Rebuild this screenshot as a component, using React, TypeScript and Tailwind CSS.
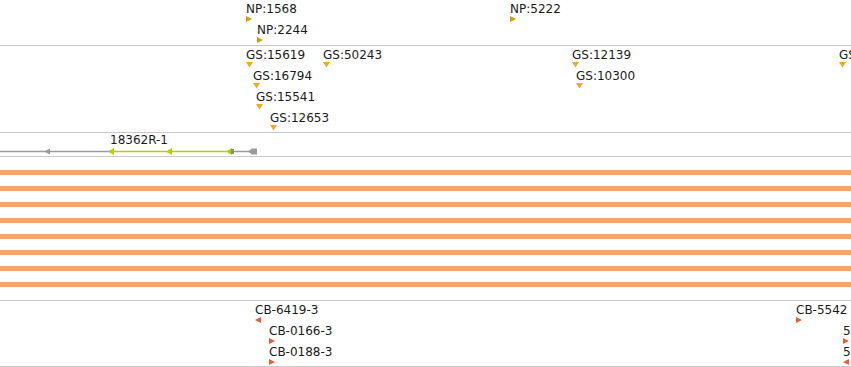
type Feat = { label: string; x: number; y: number; dir: 'right' | 'left' | 'down' };

const np: Feat[] = [
  { label: 'NP:1568', x: 246, y: 2, dir: 'right' },
  { label: 'NP:2244', x: 257, y: 23, dir: 'right' },
  { label: 'NP:5222', x: 510, y: 2, dir: 'right' },
];

const gs: Feat[] = [
  { label: 'GS:15619', x: 246, y: 2, dir: 'down' },
  { label: 'GS:50243', x: 323, y: 2, dir: 'down' },
  { label: 'GS:16794', x: 253, y: 23, dir: 'down' },
  { label: 'GS:15541', x: 256, y: 44, dir: 'down' },
  { label: 'GS:12653', x: 270, y: 65, dir: 'down' },
  { label: 'GS:12139', x: 572, y: 2, dir: 'down' },
  { label: 'GS:10300', x: 576, y: 23, dir: 'down' },
  { label: 'GS', x: 839, y: 2, dir: 'down' },
];

const cb: Feat[] = [
  { label: 'CB-6419-3', x: 255, y: 2, dir: 'left' },
  { label: 'CB-0166-3', x: 269, y: 23, dir: 'right' },
  { label: 'CB-0188-3', x: 269, y: 44, dir: 'right' },
  { label: 'CB-5542', x: 796, y: 2, dir: 'right' },
  { label: '5', x: 843, y: 23, dir: 'right' },
  { label: '5', x: 843, y: 44, dir: 'left' },
];

function Marker({ dir, color }: { dir: Feat['dir']; color: string }) {
  if (dir === 'down') {
    return (
      <svg width="7" height="6" className="block">
        <polygon points="0,0 7,0 3.5,5.5" fill={color} />
      </svg>
    );
  }
  return (
    <svg width="6" height="6" className="block">
      {dir === 'right' ? (
        <polygon points="0,0 6,3 0,6" fill={color} />
      ) : (
        <polygon points="6,0 0,3 6,6" fill={color} />
      )}
    </svg>
  );
}

function Track({ feats, color, h }: { feats: Feat[]; color: string; h: string }) {
  return (
    <div className={`relative overflow-hidden border-b border-[#c8c8c8] ${h}`}>
      {feats.map((f, i) => (
        <div key={i} className="absolute flex flex-col" style={{ left: f.x, top: f.y }}>
          <span className="text-[12px] leading-[14px] text-[#1a1a1a] whitespace-nowrap">{f.label}</span>
          <Marker dir={f.dir} color={color} />
        </div>
      ))}
    </div>
  );
}

function GeneTrack() {
  return (
    <div className="relative h-[24px] border-b border-[#c8c8c8]">
      <span className="absolute left-[110px] top-0 text-[12px] leading-[14px] text-[#1a1a1a]">18362R-1</span>
      <svg width="851" height="23" className="absolute left-0 top-0">
        <line x1="0" y1="18.5" x2="111" y2="18.5" stroke="#9a9a9a" strokeWidth="1.5" />
        <polygon points="44,18.5 50,15.5 50,21.5" fill="#9a9a9a" />
        <line x1="110" y1="18.5" x2="233" y2="18.5" stroke="#b8cc00" strokeWidth="1.5" />
        <polygon points="108,18.5 114,15 114,22" fill="#b8cc00" />
        <polygon points="166,18.5 172,15 172,22" fill="#b8cc00" />
        <polygon points="226,18.5 232,15 232,22" fill="#b8cc00" />
        <rect x="231" y="16" width="3" height="5" fill="#8a8a8a" />
        <line x1="234" y1="18.5" x2="252" y2="18.5" stroke="#9a9a9a" strokeWidth="1.5" />
        <polygon points="248,18.5 252,15.5 257,15.5 257,21.5 252,21.5" fill="#9a9a9a" />
      </svg>
    </div>
  );
}

export default function App() {
  return (
    <div className="w-[851px] h-[367px] bg-white overflow-hidden" style={{ fontFamily: '"DejaVu Sans", sans-serif' }}>
      <Track feats={np} color="#d49a00" h="h-[46px]" />
      <Track feats={gs} color="#f5a623" h="h-[87px]" />
      <GeneTrack />
      <div className="flex h-[144px] flex-col gap-[11px] border-b border-[#c8c8c8] pt-[13px]">
        {[0, 1, 2, 3, 4, 5, 6, 7].map((i) => (
          <div key={i} className="h-[5px] bg-[#f5a46e]" />
        ))}
      </div>
      <Track feats={cb} color="#f05a32" h="h-[66px]" />
    </div>
  );
}
